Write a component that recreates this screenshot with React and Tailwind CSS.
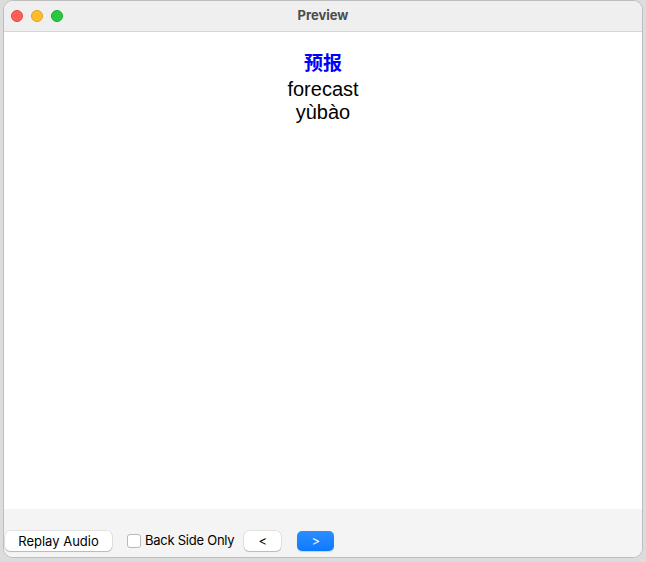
import React, { useState } from 'react';

export default function App() {
  const [backOnly, setBackOnly] = useState(false);

  const btnClass =
    'h-[20px] rounded-[5px] bg-white text-[13px] leading-none text-black shadow-[0_0_0_0.5px_rgba(0,0,0,0.15),0_1px_1px_rgba(0,0,0,0.18)]';

  return (
    <div
      className="w-[646px] h-[562px] bg-[#dcdcdc] overflow-hidden"
      style={{ fontFamily: 'Inter, "Noto Sans CJK SC", sans-serif' }}
    >
      <div className="ml-[3px] w-[640px] h-[558px] rounded-[10px] border border-[#bdbdbd] overflow-hidden flex flex-col bg-white">
        {/* Title bar */}
        <div className="relative h-[31px] shrink-0 bg-[#efefef] border-b border-[#d6d6d6] flex items-center justify-center">
          <div className="absolute left-[7px] top-[9px] flex gap-[8px]">
            <span className="w-[12px] h-[12px] rounded-full bg-[#fe5f57] border border-[#e2463f]" />
            <span className="w-[12px] h-[12px] rounded-full bg-[#febc2e] border border-[#e1a116]" />
            <span className="w-[12px] h-[12px] rounded-full bg-[#28c840] border border-[#14ae2a]" />
          </div>
          <span className="text-[13px] font-bold text-[#4c4c4c]">Preview</span>
        </div>

        {/* Card content */}
        <div
          className="flex-1 flex flex-col items-center pt-[19px]"
          style={{ fontFamily: '"Liberation Sans", "Noto Sans CJK SC", sans-serif' }}
        >
          <div className="text-[19px] leading-[26px] font-bold text-[#0000ff]">预报</div>
          <div className="text-[20px] leading-[24px] text-black">forecast</div>
          <div className="text-[20px] leading-[23px] text-black">yùbào</div>
        </div>

        {/* Bottom bar */}
        <div className="h-[48px] shrink-0 bg-[#f4f4f4] flex items-center pt-[16px] pl-[1px]">
          <button className={`${btnClass} w-[107px]`}>Replay Audio</button>
          <label className="ml-[15px] flex items-center gap-[4px] text-[13px] tracking-[-0.25px] text-black">
            <input
              type="checkbox"
              checked={backOnly}
              onChange={(e) => setBackOnly(e.target.checked)}
              className="appearance-none w-[14px] h-[14px] rounded-[3px] bg-white border border-[#b9b9b9]"
            />
            Back Side Only
          </label>
          <button className={`${btnClass} ml-[10px] w-[37px]`}>&lt;</button>
          <button className="ml-[16px] w-[37px] h-[20px] rounded-[5px] text-[13px] leading-none text-white bg-gradient-to-b from-[#2b8eff] to-[#0a7aff] shadow-[0_1px_1px_rgba(0,0,0,0.15)]">
            &gt;
          </button>
        </div>
      </div>
    </div>
  );
}
